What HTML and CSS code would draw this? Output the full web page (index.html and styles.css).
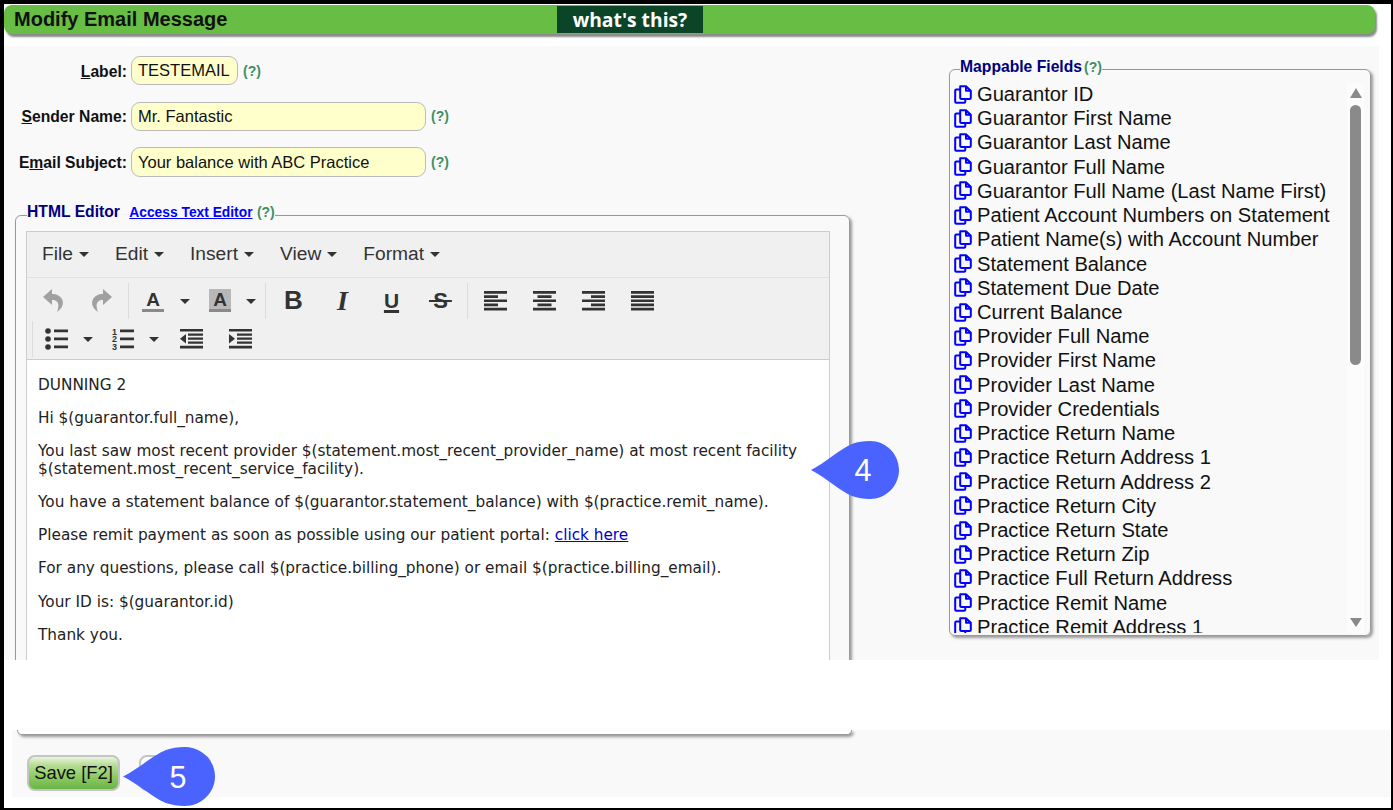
FILE: index.html
```html
<!DOCTYPE html>
<html lang="en">
<head>
<meta charset="utf-8">
<title>Modify Email Message</title>
<link rel="stylesheet" href="styles.css">
</head>
<body>
<svg class="sprite" aria-hidden="true">
  <symbol id="copy" viewBox="0 0 18 19">
    <path d="M6.2 1.2H12l4.8 4.6V13c0 .7-.4 1.1-1.1 1.1H7.3c-.7 0-1.1-.4-1.1-1.1V1.2Z M12 1.2V5.8H16.8" fill="none" stroke="currentColor" stroke-width="2" stroke-linejoin="round"/>
    <path d="M6.2 4.6H2.3c-.7 0-1.1.4-1.1 1.1V16.7c0 .7.4 1.1 1.1 1.1h7.9c.7 0 1.1-.4 1.1-1.1V14" fill="none" stroke="currentColor" stroke-width="2"/>
  </symbol>
  <symbol id="undo" viewBox="0 0 20 23">
    <path d="M9 0 0 8l9 8v-5c6 0 8 4 5 12 6-4 7-9 5-13-2-3-5-5-10-5Z" fill="currentColor"/>
  </symbol>
  <symbol id="al" viewBox="0 0 23 20"><path d="M0 0h23v2.7H0zM0 4.2h14v2.7H0zM0 8.4h23v2.7H0zM0 12.6h14v2.7H0zM0 16.8h23v2.7H0z" fill="currentColor"/></symbol>
  <symbol id="ac" viewBox="0 0 23 20"><path d="M0 0h23v2.7H0zM4.5 4.2h14v2.7h-14zM0 8.4h23v2.7H0zM4.5 12.6h14v2.7h-14zM0 16.8h23v2.7H0z" fill="currentColor"/></symbol>
  <symbol id="ar" viewBox="0 0 23 20"><path d="M0 0h23v2.7H0zM9 4.2h14v2.7H9zM0 8.4h23v2.7H0zM9 12.6h14v2.7H9zM0 16.8h23v2.7H0z" fill="currentColor"/></symbol>
  <symbol id="aj" viewBox="0 0 23 20"><path d="M0 0h23v2.7H0zM0 4.2h23v2.7H0zM0 8.4h23v2.7H0zM0 12.6h23v2.7H0zM0 16.8h23v2.7H0z" fill="currentColor"/></symbol>
  <symbol id="outd" viewBox="0 0 23 20"><path d="M0 0h23v2.6H0zM8 4.4h15v2.4H8zM8 8.4h15v2.4H8zM8 12.4h15v2.4H8zM0 16.8h23v2.6H0zM6 5v9.6L0 9.8Z" fill="currentColor"/></symbol>
  <symbol id="ind" viewBox="0 0 23 20"><path d="M0 0h23v2.6H0zM8 4.4h15v2.4H8zM8 8.4h15v2.4H8zM8 12.4h15v2.4H8zM0 16.8h23v2.6H0zM0 5v9.6l6-4.8Z" fill="currentColor"/></symbol>
</svg>

<div class="page">
  <header class="titlebar">
    <h1 class="title">Modify Email Message</h1>
    <a class="whats-this">what's this?</a>
  </header>

  <main class="panel">
    <div class="col-left">
      <div class="form-row">
        <label class="form-label"><u>L</u>abel:</label>
        <div class="input input-short">TESTEMAIL</div>
        <span class="help">(?)</span>
      </div>
      <div class="form-row">
        <label class="form-label"><u>S</u>ender Name:</label>
        <div class="input input-long">Mr. Fantastic</div>
        <span class="help">(?)</span>
      </div>
      <div class="form-row">
        <label class="form-label">E<u>m</u>ail Subject:</label>
        <div class="input input-long input-tall">Your balance with ABC Practice</div>
        <span class="help">(?)</span>
      </div>

      <fieldset class="box editor-box">
        <legend class="box-legend">HTML Editor <a class="legend-link">Access Text Editor</a> <span class="help help-legend">(?)</span></legend>
        <div class="editor">
          <nav class="menubar">
            <span class="menu">File<i class="caret"></i></span>
            <span class="menu">Edit<i class="caret"></i></span>
            <span class="menu">Insert<i class="caret"></i></span>
            <span class="menu">View<i class="caret"></i></span>
            <span class="menu">Format<i class="caret"></i></span>
          </nav>
          <div class="toolbar">
            <div class="tb-row tb-row-1">
              <span class="tb-btn disabled"><svg class="ico-undo"><use href="#undo"/></svg></span>
              <span class="tb-btn disabled"><svg class="ico-undo flip"><use href="#undo"/></svg></span>
              <span class="tb-sep"></span>
              <span class="tb-color tb-color-1"><span class="glyph-a">A</span></span>
              <span class="tb-caret"><i class="caret"></i></span>
              <span class="tb-color tb-color-2"><span class="glyph-a hl">A</span></span>
              <span class="tb-caret"><i class="caret"></i></span>
              <span class="tb-sep tb-sep-b"></span>
              <span class="tb-btn glyph glyph-b">B</span>
              <span class="tb-btn glyph glyph-i">I</span>
              <span class="tb-btn glyph"><span class="glyph-u">U</span></span>
              <span class="tb-btn glyph"><span class="glyph-s">S</span></span>
              <span class="tb-sep tb-sep-c"></span>
              <span class="tb-btn"><svg class="ico-line"><use href="#al"/></svg></span>
              <span class="tb-btn"><svg class="ico-line"><use href="#ac"/></svg></span>
              <span class="tb-btn"><svg class="ico-line"><use href="#ar"/></svg></span>
              <span class="tb-btn"><svg class="ico-line"><use href="#aj"/></svg></span>
            </div>
            <div class="tb-row tb-row-2">
              <span class="tb-sep"></span>
              <span class="tb-list">
                <svg class="ico-list" viewBox="0 0 23 22"><circle cx="3" cy="3" r="2.8"/><circle cx="3" cy="11" r="2.8"/><circle cx="3" cy="19" r="2.8"/><path d="M9 1.5h14v2.7H9zM9 9.5h14v2.7H9zM9 17.5h14v2.7H9z"/></svg>
              </span>
              <span class="tb-caret"><i class="caret"></i></span>
              <span class="tb-list tb-list-num">
                <svg class="ico-list" viewBox="0 0 23 22"><text x="0" y="6.5" class="mini">1</text><text x="0" y="14" class="mini">2</text><text x="0" y="21.5" class="mini">3</text><path d="M8 1.5h14v2.7H8zM8 9.5h14v2.7H8zM8 17.5h14v2.7H8z"/></svg>
              </span>
              <span class="tb-caret"><i class="caret"></i></span>
              <span class="tb-btn tb-btn-outd"><svg class="ico-line"><use href="#outd"/></svg></span>
              <span class="tb-btn"><svg class="ico-line"><use href="#ind"/></svg></span>
            </div>
          </div>
          <div class="editor-body">
            <p>DUNNING 2</p>
            <p>Hi $(guarantor.full_name),</p>
            <p>You last saw most recent provider $(statement.most_recent_provider_name) at most recent facility $(statement.most_recent_service_facility).</p>
            <p>You have a statement balance of $(guarantor.statement_balance) with $(practice.remit_name).</p>
            <p>Please remit payment as soon as possible using our patient portal: <a class="body-link">click here</a></p>
            <p>For any questions, please call $(practice.billing_phone) or email $(practice.billing_email).</p>
            <p>Your ID is: $(guarantor.id)</p>
            <p>Thank you.</p>
          </div>
        </div>
      </fieldset>
    </div>

    <fieldset class="box fields-box">
      <legend class="box-legend">Mappable Fields<span class="help help-legend-2">(?)</span></legend>
      <div class="fields-inner">
        <ul class="fields">
          <li><svg class="ico-copy"><use href="#copy"/></svg>Guarantor ID</li>
          <li><svg class="ico-copy"><use href="#copy"/></svg>Guarantor First Name</li>
          <li><svg class="ico-copy"><use href="#copy"/></svg>Guarantor Last Name</li>
          <li><svg class="ico-copy"><use href="#copy"/></svg>Guarantor Full Name</li>
          <li><svg class="ico-copy"><use href="#copy"/></svg>Guarantor Full Name (Last Name First)</li>
          <li><svg class="ico-copy"><use href="#copy"/></svg>Patient Account Numbers on Statement</li>
          <li><svg class="ico-copy"><use href="#copy"/></svg>Patient Name(s) with Account Number</li>
          <li><svg class="ico-copy"><use href="#copy"/></svg>Statement Balance</li>
          <li><svg class="ico-copy"><use href="#copy"/></svg>Statement Due Date</li>
          <li><svg class="ico-copy"><use href="#copy"/></svg>Current Balance</li>
          <li><svg class="ico-copy"><use href="#copy"/></svg>Provider Full Name</li>
          <li><svg class="ico-copy"><use href="#copy"/></svg>Provider First Name</li>
          <li><svg class="ico-copy"><use href="#copy"/></svg>Provider Last Name</li>
          <li><svg class="ico-copy"><use href="#copy"/></svg>Provider Credentials</li>
          <li><svg class="ico-copy"><use href="#copy"/></svg>Practice Return Name</li>
          <li><svg class="ico-copy"><use href="#copy"/></svg>Practice Return Address 1</li>
          <li><svg class="ico-copy"><use href="#copy"/></svg>Practice Return Address 2</li>
          <li><svg class="ico-copy"><use href="#copy"/></svg>Practice Return City</li>
          <li><svg class="ico-copy"><use href="#copy"/></svg>Practice Return State</li>
          <li><svg class="ico-copy"><use href="#copy"/></svg>Practice Return Zip</li>
          <li><svg class="ico-copy"><use href="#copy"/></svg>Practice Full Return Address</li>
          <li><svg class="ico-copy"><use href="#copy"/></svg>Practice Remit Name</li>
          <li><svg class="ico-copy"><use href="#copy"/></svg>Practice Remit Address 1</li>
        </ul>
        <div class="scrollbar">
          <i class="arrow-up"></i>
          <span class="thumb"></span>
          <i class="arrow-down"></i>
        </div>
      </div>
    </fieldset>
  </main>

  <div class="gap"></div>

  <footer class="footer">
    <div class="editor-box-end"></div>
    <div class="buttons">
      <button class="btn btn-save">Save [F2]</button>
      <button class="btn btn-other" aria-label="Other action"></button>
    </div>
  </footer>

  <div class="callout callout-4">
    <svg viewBox="0 0 88 58" preserveAspectRatio="none"><path d="M0 29 C14 22 29 8 41 3 C47 .8 52 0 59 0 C75 0 88 13 88 29 C88 45 75 58 59 58 C52 58 47 57 41 55 C29 50 14 36 0 29Z"/></svg>
    <span class="callout-num">4</span>
  </div>
  <div class="callout callout-5">
    <svg viewBox="0 0 88 58" preserveAspectRatio="none"><path d="M0 29 C14 22 29 8 41 3 C47 .8 52 0 59 0 C75 0 88 13 88 29 C88 45 75 58 59 58 C52 58 47 57 41 55 C29 50 14 36 0 29Z"/></svg>
    <span class="callout-num">5</span>
  </div>
</div>
</body>
</html>
```
FILE: styles.css
```css
* { box-sizing: border-box; }
html, body { margin: 0; height: 810px; overflow: hidden; background: #000; }
body { font-family: "Liberation Sans", Arial, sans-serif; color: #000; }
.sprite { display: none; }

.page {
  position: relative;
  margin: 4px 2px 2px 4px;
  width: 1387px;
  height: 804px;
  background: #fff;
  overflow: hidden;
}

/* title bar */
.titlebar {
  display: flex;
  align-items: stretch;
  height: 29px;
  width: 1371px;
  margin-top: 1px;
  background: #68bd45;
  border-radius: 8px;
  box-shadow: 2px 3px 2px #8b8b8b;
}
.title {
  margin: 0;
  width: 553px;
  padding-left: 10px;
  font-size: 20px;
  line-height: 28px;
  font-weight: bold;
  color: #111;
}
.whats-this {
  width: 146px;
  height: 27px;
  margin-top: 1px;
  background: #0c4428;
  color: #fff;
  text-align: center;
  font-family: "Open Sans", sans-serif;
  font-weight: bold;
  font-size: 19.3px;
  line-height: 27px;
}

/* main panel */
.panel {
  display: flex;
  justify-content: space-between;
  align-items: flex-start;
  height: 614px;
  width: 1375px;
  margin-top: 12px;
  padding-right: 8px;
  background: #f9f9f9;
  overflow: hidden;
}
.col-left { width: 860px; padding-top: 10px; }

.form-row {
  display: flex;
  align-items: center;
  margin-bottom: 16.5px;
}
.form-label {
  width: 123px;
  margin-right: 4px;
  padding-top: 2px;
  text-align: right;
  font-weight: bold;
  font-size: 15.7px;
  color: #111;
}
.input {
  height: 29px;
  padding-left: 6px;
  background: #ffc;
  border: 1px solid #bbb;
  border-radius: 9px;
  font-size: 16.5px;
  line-height: 27px;
  color: #111;
}
.input-short { width: 107px; }
.input-long { width: 295px; }
.input-tall { height: 30px; line-height: 28px; }
.help {
  margin-left: 5px;
  font-weight: bold;
  font-size: 14px;
  color: #3f8f63;
}

/* fieldsets */
.box {
  margin: 0;
  padding: 0;
  border: 1px solid #999;
  border-radius: 6px;
  box-shadow: 2px 2px 3px #999;
}
.box-legend {
  padding: 0 0 5px;
  font-weight: bold;
  font-size: 15.7px;
  line-height: 22px;
  color: #00007f;
}
.editor-box {
  width: 835px;
  height: 600px;
  margin: 24px 0 0 11px;
}
.editor-box .box-legend { margin-left: 11px; }
.legend-link {
  margin-left: 5px;
  color: #00f;
  font-size: 13.8px;
  text-decoration: underline;
}
.help-legend { margin-left: 0; }
.help-legend-2 { margin-left: 2px; }

/* editor */
.editor {
  margin: 1.5px 0 0 10px;
  width: 804px;
  border: 1px solid #ccc;
  border-bottom: 0;
  background: #fff;
}
.menubar {
  display: flex;
  height: 46px;
  padding-left: 15px;
  align-items: center;
  background: #f0f0f0;
  border-bottom: 1px solid #e2e2e2;
  font-size: 19.2px;
  color: #333;
}
.menu { display: flex; align-items: center; margin-right: 26px; }
.caret {
  display: block;
  width: 0;
  height: 0;
  margin-left: 6px;
  border-style: solid;
  border-width: 5px 5px 0;
  border-color: #333 transparent transparent;
}
.toolbar {
  height: 82px;
  padding-top: 4px;
  background: #f0f0f0;
  border-bottom: 1px solid #ccc;
}
.tb-row { display: flex; align-items: center; height: 38px; color: #333; }
.tb-row-1 { padding-left: 1px; }
.tb-row-2 { padding-left: 5px; }
.tb-btn {
  display: flex;
  align-items: center;
  justify-content: center;
  width: 49px;
  height: 38px;
}
.disabled { color: #a0a0a0; }
.tb-sep {
  width: 1px;
  height: 36px;
  margin: 0 1px 0 2px;
  background: #dcdcdc;
}
.tb-row-2 .tb-sep { margin: 0; }
.tb-sep-b { margin: 0 3px 0 5px; }
.tb-sep-c { margin: 0 3px 0 2px; }
.ico-undo { width: 20px; height: 23px; }
.flip { transform: scaleX(-1); }
.ico-line { width: 23px; height: 20px; }
.tb-color {
  display: flex;
  align-items: center;
  justify-content: center;
  width: 46px;
  height: 38px;
}
.tb-color-2 { margin-left: 4px; width: 44px; }
.tb-caret {
  display: flex;
  align-items: center;
  justify-content: center;
  width: 18px;
  height: 38px;
}
.tb-caret .caret { margin: 2px 0 0; }
.glyph-a {
  display: block;
  width: 22px;
  height: 23px;
  text-align: center;
  font-size: 19px;
  line-height: 21px;
  font-weight: bold;
  border-bottom: 3px solid #8a8a8a;
}
.hl { background: #b8b8b8; }
.glyph { font-size: 26px; font-weight: bold; color: #333; }
.glyph-i { font-style: italic; font-family: "Liberation Serif", serif; font-size: 28px; }
.glyph-u { text-decoration: underline; text-decoration-thickness: 3px; text-underline-offset: 2px; font-size: 21px; }
.glyph-s {
  padding: 0 4px;
  font-size: 22px;
  background: linear-gradient(#333, #333) center / 100% 2px no-repeat;
}
.tb-list {
  display: flex;
  align-items: center;
  justify-content: center;
  width: 46px;
  height: 38px;
}
.tb-list-num { margin-left: 4px; width: 44px; }
.ico-list { width: 23px; height: 22px; fill: #333; }
.mini { font-size: 9px; font-weight: bold; fill: #333; }
.tb-btn-outd { margin-left: 4px; }

.editor-body {
  height: 320px;
  padding: 16px 11px 0;
  font-family: "DejaVu Sans", Verdana, sans-serif;
  font-size: 15.3px;
  line-height: 18px;
  color: #222;
}
.editor-body p { margin: 0 0 15.2px; }
.body-link { color: #00c; text-decoration: underline; }

/* mappable fields */
.fields-box {
  width: 422px;
  height: 580.5px;
  margin-top: 9.5px;
}
.fields-box .box-legend { margin-left: 10px; }
.fields-inner {
  display: flex;
  height: 550px;
  padding-left: 4px;
  overflow: hidden;
}
.fields {
  flex: 1;
  margin: -0.5px 0 0;
  padding: 0;
  list-style: none;
  font-size: 20.15px;
  line-height: 24.23px;
  color: #111;
}
.fields li { display: flex; align-items: center; white-space: nowrap; height: 24.23px; }
.ico-copy { flex: none; width: 18px; height: 19px; margin-right: 5px; color: #00f; }
.scrollbar {
  display: flex;
  flex-direction: column;
  align-items: center;
  width: 17px;
  margin-right: 6px;
  padding-top: 5.5px;
  background: #fcfcfc;
}
.arrow-up, .arrow-down {
  display: block;
  width: 0;
  height: 0;
  border-style: solid;
  border-color: transparent;
}
.arrow-up { border-width: 0 6px 10px; border-bottom-color: #8a8a8a; }
.arrow-down { border-width: 9px 6px 0; border-top-color: #8a8a8a; margin-top: 253px; }
.thumb {
  display: block;
  width: 11px;
  height: 260px;
  margin-top: 7px;
  background: #8a8a8a;
  border-radius: 6px;
}

.gap { height: 70px; }

/* footer */
.footer {
  width: 1378px;
  height: 67px;
  margin-left: 8px;
  background: #f9f9f9;
}
.editor-box-end {
  width: 835px;
  height: 5px;
  margin-left: 5px;
  background: #fff;
  border: 1px solid #999;
  border-top: 0;
  border-radius: 0 0 6px 6px;
  box-shadow: 2px 2px 3px #999;
}
.buttons { display: flex; padding: 20px 0 0 15px; gap: 19px; }
.btn {
  height: 36px;
  border: 2px solid #c4c4c4;
  border-radius: 8px;
  font-family: "Liberation Sans", Arial, sans-serif;
  font-size: 18.4px;
  color: #111;
  padding: 0;
}
.btn-save {
  width: 93px;
  background: linear-gradient(#eaf5e0, #b7dd96 25%, #8fcb66 60%, #6ab544);
}
.btn-other { width: 72px; background: #fff; }

/* callouts */
.callout { position: absolute; width: 88px; height: 58px; }
.callout svg { display: block; width: 100%; height: 100%; fill: #4a63ff; }
.callout-num {
  position: absolute;
  left: 0;
  top: 0;
  width: 104px;
  text-align: center;
  color: #fff;
  font-size: 30.5px;
  line-height: 58px;
}
.callout-4 { left: 807px; top: 437px; }
.callout-5 { left: 119px; top: 743px; width: 92px; height: 59px; }
.callout-5 .callout-num { width: 110px; line-height: 60px; }
```
